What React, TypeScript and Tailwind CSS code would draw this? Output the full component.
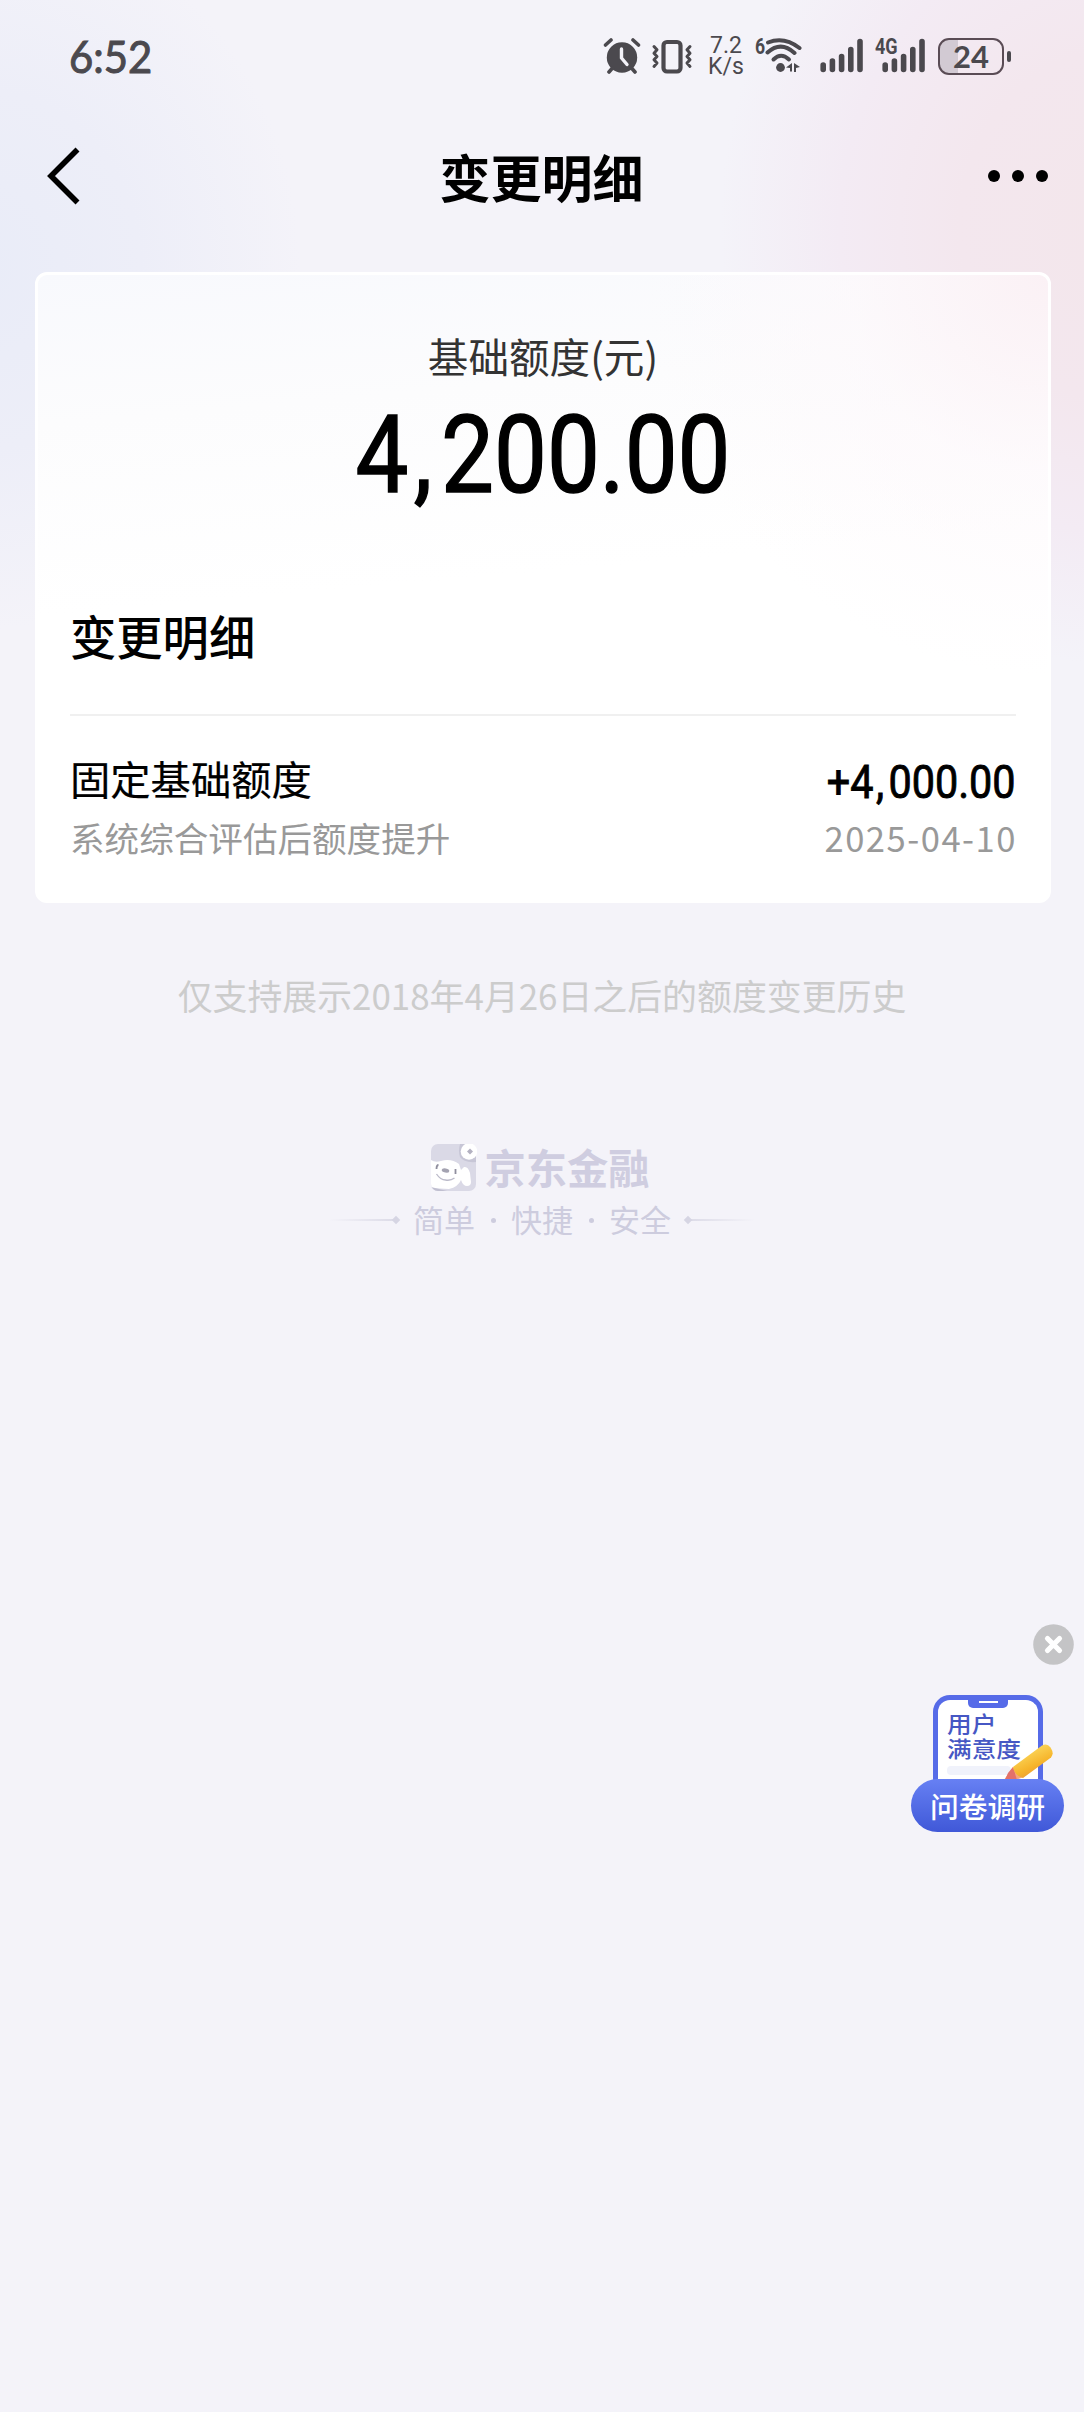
import React from 'react';

const CJK = "font-['Noto_Sans_CJK_SC',sans-serif]";

function AlarmIcon() {
  return (
    <svg width="38" height="38" viewBox="0 0 38 38" fill="none" stroke="#4b494e" strokeLinecap="round">
      <circle cx="19" cy="20.5" r="15.2" fill="#4b494e" stroke="none" />
      <path d="M2.5 8 8 3M30 3l5.500 5M9.500 31l-3.500 4M28.500 31l3.500 4" strokeWidth="3.600" />
      <path d="M18.500 12v9l5.500 6.500" stroke="#f3f2f8" strokeWidth="3.400" />
    </svg>
  );
}

function VibrateIcon() {
  return (
    <svg width="42" height="36" viewBox="0 0 42 36" fill="none" stroke="#4b494e" strokeLinecap="round" strokeLinejoin="round">
      <rect x="12.500" y="3" width="17" height="29.500" rx="3.500" strokeWidth="4.200" />
      <path d="M3 7.500l3 3.300-3 3.400 3 3.300-3 3.300 3 3.300-3 3.400M39 7.500l-3 3.300 3 3.400-3 3.300 3 3.300-3 3.300 3 3.400" strokeWidth="3" />
    </svg>
  );
}

function WifiIcon() {
  return (
    <svg width="38" height="36" viewBox="0 0 38 36" fill="none" stroke="#4b494e" strokeLinecap="round">
      <path d="M3 4.500Q19 -2 34.500 10" strokeWidth="4" />
      <path d="M2.500 14.500Q16 2.500 29.500 15" strokeWidth="4" />
      <path d="M8.500 21.500Q16 14 24 21.500" strokeWidth="4" />
      <circle cx="15.500" cy="29.500" r="4.400" fill="#4b494e" stroke="none" />
      <path d="M21 29.500l6-4.500v8.500h-2v-3.500zM29 25l6 4-4 1v4h-2z" fill="#4b494e" stroke="none" />
    </svg>
  );
}

function SignalBars() {
  return (
    <svg width="44" height="36" viewBox="0 0 44 36" stroke="#4b494e" strokeWidth="5.600" strokeLinecap="round">
      <path d="M3.200 27v4.500M12.400 23v8.500M21.600 18.500v13M30.800 11.500v20M40 3.500v28" />
    </svg>
  );
}

function StatusBar() {
  return (
    <div className="flex h-[115px] items-start justify-between pl-[69px] pr-[73px] text-[#4b494e]">
      <div className="mt-[33px] origin-left scale-x-[0.95] font-['Lato'] text-[44px] leading-[46px] font-normal [-webkit-text-stroke:1px_#4b494e]">6:52</div>
      <div className="mt-[38px] flex items-start">
        <div className="mt-[-1px]"><AlarmIcon /></div>
        <div className="ml-[10px] mt-px"><VibrateIcon /></div>
        <div className="ml-[14px] mt-[-3px] w-[38px] whitespace-nowrap text-center font-['Roboto'] text-[23px] leading-[21px]">
          <div>7.2</div>
          <div>K/s</div>
        </div>
        <div className="ml-[10px] w-[11px] font-['Roboto'] text-[22px] leading-[17px] font-bold">
          <span className="inline-block origin-left scale-x-[0.8]">6</span>
        </div>
        <div className="-ml-px"><WifiIcon /></div>
        <div className="ml-[17px]"><SignalBars /></div>
        <div className="relative ml-[18px]">
          <SignalBars />
          <span className="absolute -left-[7px] top-[-1px] origin-left scale-x-[0.82] font-['Roboto'] text-[22px] leading-[20px] font-bold">4G</span>
        </div>
        <div className="ml-[12px] flex items-center">
          <div className="flex h-[37px] w-[66px] items-center justify-center rounded-[11px] border-[2.500px] border-[#5a4c55] bg-[linear-gradient(90deg,#d2cad3_0,#d2cad3_18px,transparent_18px)] pb-[2px] font-['Lato'] text-[31px] font-bold leading-[30px]">24</div>
          <div className="ml-[3px] h-[11px] w-[4px] rounded-full bg-[#4b494e]" />
        </div>
      </div>
    </div>
  );
}

function NavBar() {
  return (
    <div className="flex h-[124px] items-center justify-between pl-[47px] pr-[36px]">
      <svg width="48" height="60" viewBox="0 0 48 60" fill="none" stroke="#000" strokeWidth="5.600">
        <path d="M30.500 2.500 4 29 30.500 55.500" />
      </svg>
      <h1 className={`${CJK} -mt-[3px] text-[51px] font-bold leading-[60px] text-black`}>变更明细</h1>
      <div className="-mt-[2px] flex gap-[12px]">
        <div className="size-[12px] rounded-full bg-black" />
        <div className="size-[12px] rounded-full bg-black" />
        <div className="size-[12px] rounded-full bg-black" />
      </div>
    </div>
  );
}

function QuotaCard() {
  return (
    <section className={`${CJK} ml-[35px] mr-[33px] mt-[33px] rounded-[12px] border-[3px] border-white bg-[radial-gradient(circle_at_100%_0%,#fbf1f5_0,rgba(253,248,251,0.6)_200px,transparent_400px),linear-gradient(175deg,#f8f9fd_0,#fcfcfd_150px,#ffffff_340px)] px-[32px] pb-[38px] pt-[51px]`}>
      <div className="text-center text-[40.600px] leading-[60px] text-[#333]">基础额度(元)</div>
      <div className="mt-[20px] flex h-[100px] items-center justify-center font-['Roboto'] text-[107px] font-normal leading-[100px] text-black [-webkit-text-stroke:1.500px_#000]">
        <span className="flex origin-center scale-x-[0.88]">
          <span>4</span><span className="w-[37px] pr-[4px] text-center">,</span><span>200.00</span>
        </span>
      </div>
      <h2 className="mt-[99px] text-[46.300px] font-medium leading-[60px] text-black">变更明细</h2>
      <div className="mt-[49px] h-[2px] bg-[#f0f0f0]" />
      <div className="mt-[37px] flex h-[50px] items-center justify-between text-black">
        <span className="text-[40.300px] leading-[50px] [-webkit-text-stroke:0.2px_#000]">固定基础额度</span>
        <span className="mt-[8px] flex origin-right scale-x-[0.88] font-['Roboto'] text-[47px] font-normal leading-[50px] [-webkit-text-stroke:0.900px_#000]">
          <span>+4</span><span className="w-[17px] pr-[2px] text-center">,</span><span>000.00</span>
        </span>
      </div>
      <div className="mt-[9px] flex h-[50px] items-center justify-between text-[34.600px] leading-[50px] text-[#999]">
        <span>系统综合评估后额度提升</span>
        <span className="-mr-[1px] tracking-[1.500px]">2025-04-10</span>
      </div>
    </section>
  );
}

function Mascot() {
  return (
    <svg width="46" height="47" viewBox="0 0 46 47">
      <defs>
        <clipPath id="tile"><rect x="0" y="0" width="45" height="47" rx="7" /></clipPath>
      </defs>
      <g clipPath="url(#tile)">
        <rect width="45" height="47" fill="#dad9e6" />
        <path d="M0 16q4 3 10 1 10-3 18 3l2 6 3-3q4-1 6 6l1 9q0 4-4 4-4 0-6-6-3 7-12 9L0 44z" fill="#fff" />
        <path d="M0 43l16 4H0z" fill="#c0bfd0" />
        <path d="M29 0q-2 7 0 13 4 6 16 5V0z" fill="#c7c6d6" />
      </g>
      <circle cx="38" cy="7.500" r="8.300" fill="#fff" />
      <path d="M39 4.500l3 3-3 3-3-3z" fill="#b3b1c1" />
      <path d="M5.500 25q0-4 2-4M24.500 25v5" stroke="#8f8e9e" strokeWidth="1.800" fill="none" />
      <ellipse cx="14.500" cy="26.500" rx="3.800" ry="2.100" fill="#a4a3b1" transform="rotate(10 14.500 26.500)" />
      <path d="M5.500 30q4 6 9 6 5 1 9-2" stroke="#bbbac9" strokeWidth="1.300" fill="none" />
    </svg>
  );
}

function Footer() {
  return (
    <footer className={`${CJK} flex flex-col items-center`}>
      <p className="mt-[67px] whitespace-nowrap text-[34.900px] leading-[50px] text-[#ccc]">仅支持展示2018年4月26日之后的额度变更历史</p>
      <div className="mr-[3px] mt-[124px] flex h-[46px] items-center gap-[7px]">
        <Mascot />
        <span className="-mt-[3px] text-[41.300px] font-bold leading-[46px] text-[#cfcde0]">京东金融</span>
      </div>
      <div className="mt-[10px] flex h-[40px] items-center text-[31px] leading-[40px] text-[#cdccde]">
        <div className="h-[2px] w-[64px] bg-gradient-to-r from-transparent to-[#dddce8]" />
        <div className="size-[6px] rotate-45 bg-[#d6d5e3]" />
        <div className="ml-[14px] mr-[14px] flex w-[258px] items-center justify-between">
          <span className="-mt-[2px]">简单</span>
          <span className="size-[5px] rounded-full bg-[#cdccde]" />
          <span className="-mt-[2px]">快捷</span>
          <span className="size-[5px] rounded-full bg-[#cdccde]" />
          <span className="-mt-[2px]">安全</span>
        </div>
        <div className="size-[6px] rotate-45 bg-[#d6d5e3]" />
        <div className="h-[2px] w-[64px] bg-gradient-to-l from-transparent to-[#dddce8]" />
      </div>
    </footer>
  );
}

function SurveyWidget() {
  return (
    <aside className={`${CJK} absolute left-[911px] top-[1624px] w-[163px]`}>
      <div className="flex justify-end">
        <svg width="41" height="41" viewBox="0 0 41 41">
          <circle cx="20.500" cy="20.500" r="20.300" fill="#c4c4c6" />
          <path d="M14.500 14.500l12 12M26.500 14.500l-12 12" stroke="#fff" strokeWidth="5.200" strokeLinecap="round" />
        </svg>
      </div>
      <div className="relative ml-[22px] mt-[30px] h-[100px] w-[110px] rounded-t-[17px] border-x-[5px] border-t-[5px] border-[#566be8] bg-white pl-[9px] pt-[10px] text-[#4657c4]">
        <div className="absolute left-[30px] top-[-5px] flex h-[13px] w-[40px] items-center justify-center rounded-b-[5px] bg-[#566be8]">
          <div className="h-[2px] w-[19px] bg-white" />
        </div>
        <div className="origin-left scale-x-[1.12] whitespace-nowrap text-[22px] font-medium leading-[25px]">
          <div>用户</div>
          <div>满意度</div>
        </div>
        <div className="mt-[6px] h-[9px] w-[64px] rounded bg-[#f0f2fb]" />
      </div>
      <svg className="absolute left-[93px] top-[119px]" width="52" height="42" viewBox="0 0 52 42">
        <defs>
          <linearGradient id="pencil" x1="0.300" y1="0.200" x2="0.700" y2="0.900">
            <stop offset="0" stopColor="#fbd75b" />
            <stop offset="0.600" stopColor="#f6b52c" />
            <stop offset="1" stopColor="#e99735" />
          </linearGradient>
        </defs>
        <path d="M9 24 20 34 6 39 0 37z" fill="#f4a57c" />
        <path d="M4 30l5-6 4 13-13 2z" fill="#e3716a" />
        <path d="M9 24 38 2.500q5-3 8.500 2 4 6 .5 10L19 35q-8-2-10-11z" fill="url(#pencil)" />
      </svg>
      <div className="relative -mt-[16px] flex h-[53px] w-[153px] items-center justify-center rounded-full bg-gradient-to-b from-[#6780f3] to-[#4058d8] text-[28.800px] font-medium leading-[53px] text-white">
        问卷调研
      </div>
    </aside>
  );
}

export default function App() {
  return (
    <main className="relative h-[2412px] w-[1084px] overflow-hidden bg-[#f4f3f9] bg-[radial-gradient(ellipse_400px_440px_at_1120px_225px,#f3e6eb_0,#f3e7ee_40%,#f3ebf4_70%,transparent_100%),radial-gradient(ellipse_320px_360px_at_-20px_270px,#e9ecf8_0,#edeef8_50%,transparent_100%)]">
      <StatusBar />
      <NavBar />
      <QuotaCard />
      <Footer />
      <SurveyWidget />
    </main>
  );
}
